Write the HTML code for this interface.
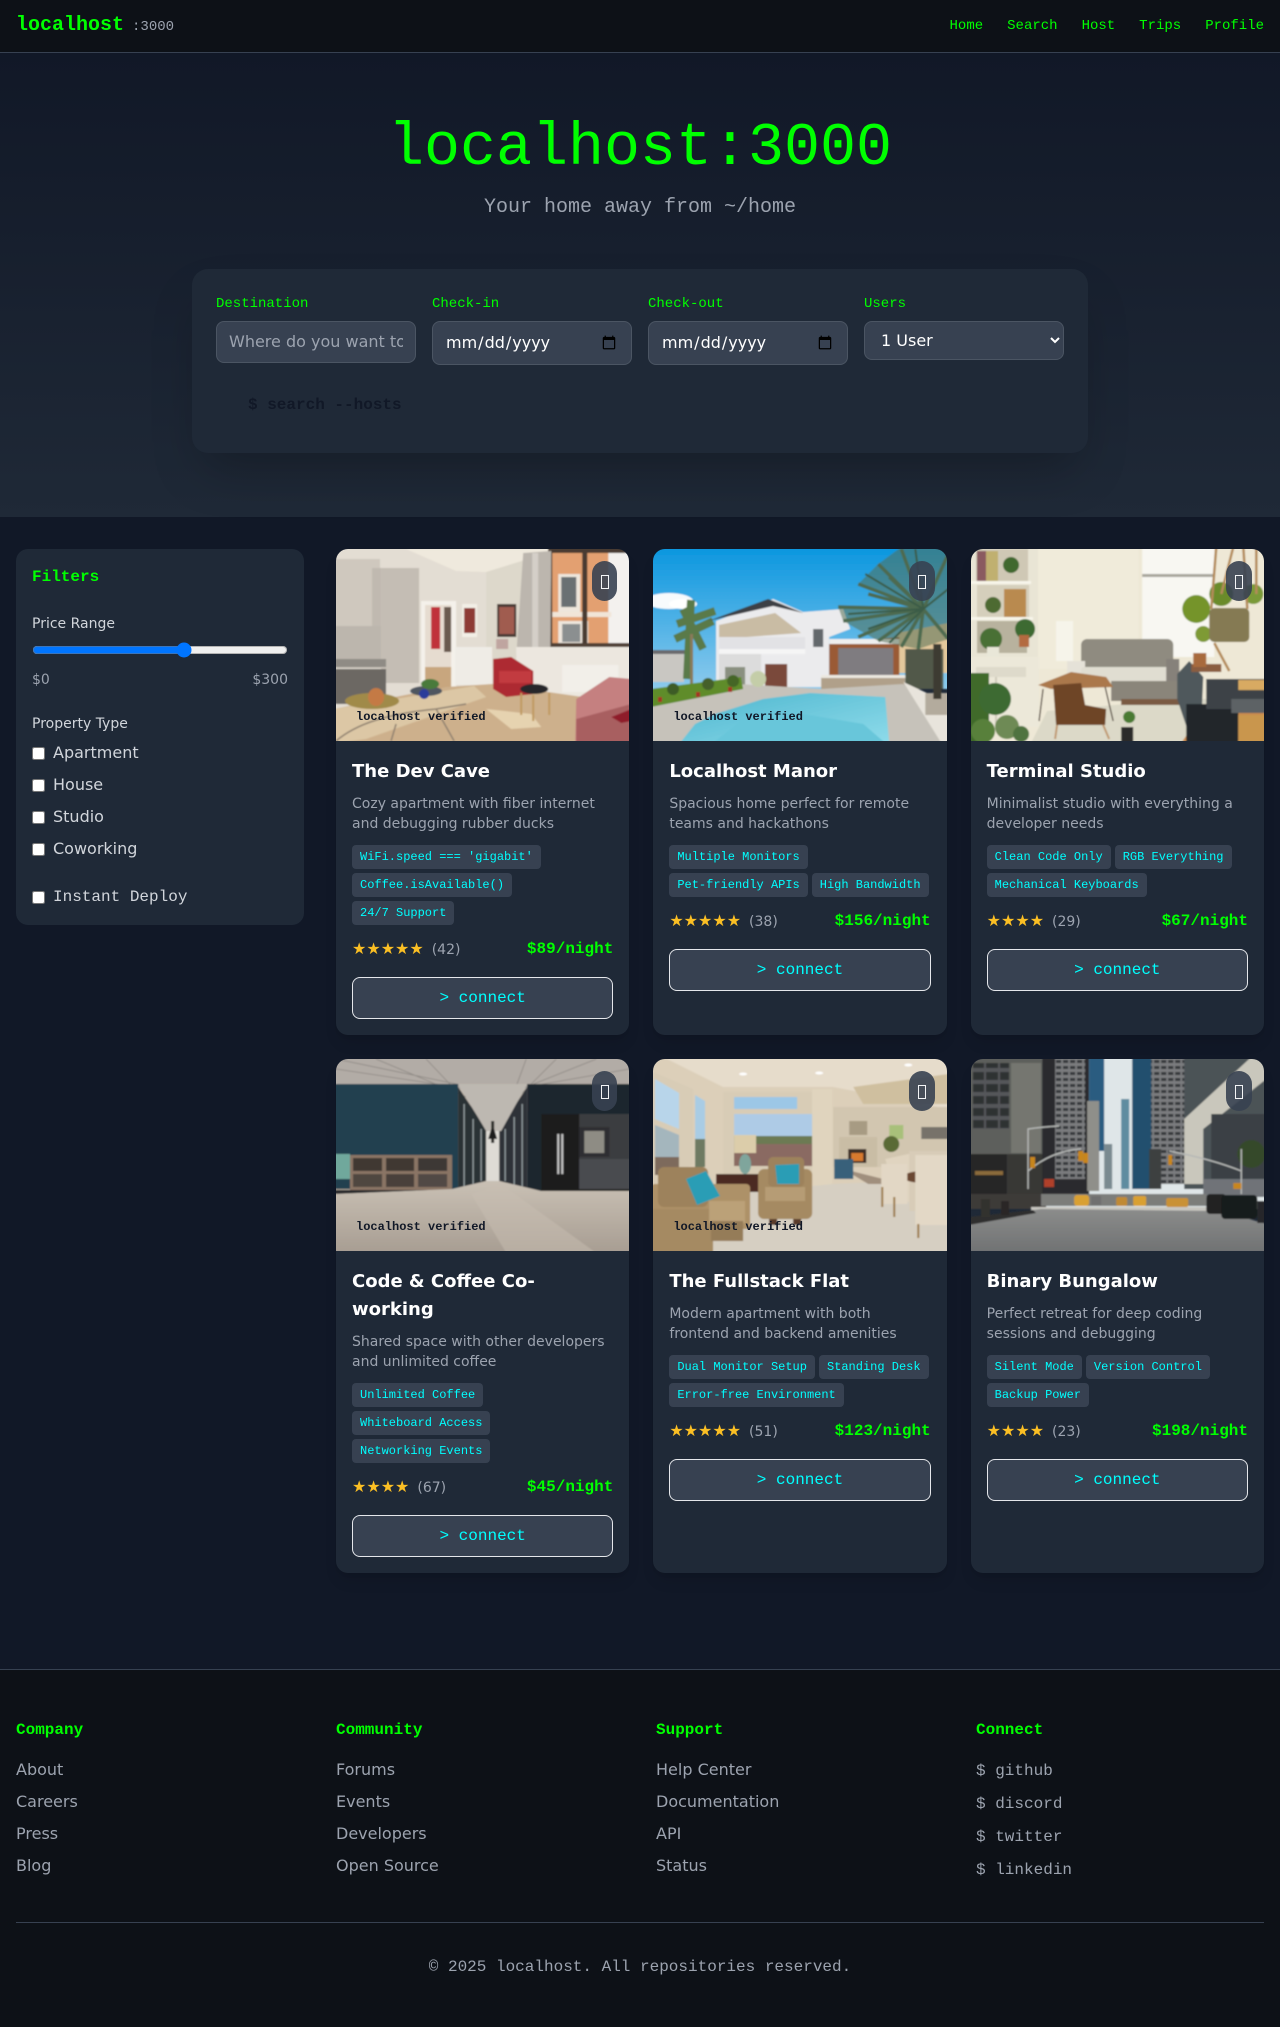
<!DOCTYPE html>
<html lang="en"><head><meta charset="utf-8"><title>localhost:3000</title>
<style>
*{box-sizing:border-box;margin:0;padding:0}
html,body{width:1280px;background:#111827}
body{font-family:"DejaVu Sans",sans-serif;font-size:16px;line-height:24px;color:#fff;height:2027px;overflow:hidden}
.mono{font-family:"Liberation Mono",monospace}
nav{height:53px;background:#0d1117;border-bottom:1px solid #374151;padding:12px 16px;display:flex;justify-content:space-between;align-items:center}
.logo b{font:bold 20px/28px "Liberation Mono",monospace;color:#0f0}
.logo span{font:14px/20px "Liberation Mono",monospace;color:#9ca3af;margin-left:8px}
.links{display:flex;gap:24px}
.links a{font:14px/20px "Liberation Mono",monospace;color:#0f0}
.hero{height:464px;padding-top:64px;background:linear-gradient(180deg,#111827,#1f2937);text-align:center}
h1{font:400 60px/60px "Liberation Mono",monospace;color:#0f0;margin-bottom:16px;position:relative;top:2px}
.sub{font:20px/28px "Liberation Mono",monospace;color:#9ca3af;margin-bottom:48px;position:relative;top:1px}
.search{width:896px;height:184px;margin:0 auto;background:#1f2937;border-radius:16px;padding:24px;box-shadow:0 25px 50px -12px rgba(0,0,0,.25);text-align:left}
.fields{display:grid;grid-template-columns:repeat(4,200px);gap:16px;align-items:start}
.fields label{display:block;font:14px/20px "Liberation Mono",monospace;color:#0f0;margin-bottom:8px;position:relative;top:1px}
.fields input,.fields select{display:block;width:100%;background:#374151;border:1px solid #4b5563;border-radius:8px;padding:8px 12px;color:#fff;font:16px/24px "DejaVu Sans",sans-serif}
.fields input::placeholder{color:#9ca3af}
.go{display:block;margin-top:16px;background:none;border:0;padding:12px 32px;font:bold 16px/24px "Liberation Mono",monospace;color:#111827}
.main{display:grid;grid-template-columns:288px 928px;gap:32px;padding:32px 16px;align-items:start}
aside{background:#1f2937;border-radius:12px;padding:16px;height:376px}
aside h3{font:bold 16px/24px "Liberation Mono",monospace;color:#0f0;margin-bottom:25px}
.lab{font-size:14px;line-height:20px;color:#d1d5db;margin-bottom:8px}
input[type=range]{display:block;width:100%;margin:0}
.range{display:flex;justify-content:space-between;font-size:14px;line-height:20px;color:#9ca3af;margin:12px 0 24px}
.ck{display:flex;align-items:center;height:24px;margin-bottom:8px;color:#d1d5db}
.ck input{width:13px;height:13px;margin:0 8px 0 0}
.grid{display:grid;grid-template-columns:repeat(3,1fr);gap:24px}
.card{background:#1f2937;border-radius:12px;overflow:hidden;box-shadow:0 10px 15px -3px rgba(0,0,0,.1),0 4px 6px -4px rgba(0,0,0,.1)}
.img{position:relative;height:192px;overflow:hidden}
.img svg{position:absolute;left:-2px;top:-2px;width:calc(100% + 4px);height:196px}
.heart{position:absolute;top:12px;right:12px;width:25.6px;height:40px;border:0;border-radius:999px;background:rgba(55,65,81,.9)}
.heart i{position:absolute;left:9px;top:14px;width:8px;height:14px;border:1px solid #f3f4f6}
.ver{position:absolute;left:12px;bottom:12px;padding:4px 8px;font:bold 12px/16px "Liberation Mono",monospace;color:#111827}
.body{padding:16px}
h2{font-size:18px;line-height:28px;font-weight:700;color:#fff;margin-bottom:8px;position:relative;top:1px}
.desc{font-size:14px;line-height:20px;color:#9ca3af;margin-bottom:12px;position:relative;top:1px}
.tags{display:flex;flex-wrap:wrap;gap:4px;margin-bottom:12px}
.tags span{font:12px/16px "Liberation Mono",monospace;color:#0ff;background:#374151;border-radius:4px;padding:4px 8px}
.row{display:flex;justify-content:space-between;align-items:center;margin-bottom:16px;height:24px}
.stars{color:#fbbf24}
.cnt{font-size:14px;color:#9ca3af;margin-left:8px}
.price{font:bold 16px/24px "Liberation Mono",monospace;color:#0f0}
.btn{display:block;width:100%;height:42px;background:#374151;border:1px solid #e5e7eb;border-radius:8px;color:#0ff;font:16px/24px "Liberation Mono",monospace}
footer{position:absolute;top:1669px;left:0;width:1280px;height:358px;background:#0d1117;border-top:1px solid #374151;padding:48px 16px}
.cols{display:grid;grid-template-columns:repeat(4,288px);gap:32px;height:204px}
.cols h4{font:bold 16px/24px "Liberation Mono",monospace;color:#0f0;margin-bottom:16px}
.cols ul{list-style:none}
.cols li{margin-bottom:8px;color:#9ca3af}
.cols li span{font-family:"Liberation Mono",monospace}
.copy{border-top:1px solid #374151;padding-top:32px;text-align:center;font:16px/24px "Liberation Mono",monospace;color:#9ca3af}
</style></head><body>
<nav><div class="logo"><b>localhost</b><span>:3000</span></div><div class="links"><a>Home</a><a>Search</a><a>Host</a><a>Trips</a><a>Profile</a></div></nav>
<section class="hero"><h1>localhost:3000</h1><p class="sub">Your home away from ~/home</p>
<div class="search"><div class="fields">
<div><label>Destination</label><input type="text" placeholder="Where do you want to go?"></div>
<div><label>Check-in</label><input type="date"></div>
<div><label>Check-out</label><input type="date"></div>
<div><label>Users</label><select><option>1 User</option></select></div>
</div><button class="go">$ search --hosts</button></div></section>

<div class="main"><aside><h3>Filters</h3>
<div class="lab">Price Range</div><input type="range" min="0" max="300" value="180">
<div class="range"><span>$0</span><span>$300</span></div>
<div class="lab" style="margin-bottom:7px">Property Type</div>
<label class="ck"><input type="checkbox">Apartment</label>
<label class="ck"><input type="checkbox">House</label>
<label class="ck"><input type="checkbox">Studio</label>
<label class="ck"><input type="checkbox">Coworking</label>
<label class="ck mono" style="margin-top:24px"><input type="checkbox">Instant Deploy</label>
</aside>
<div class="grid">

<article class="card"><div class="img"><svg viewBox="-2 -2 297 196" preserveAspectRatio="none"><defs><filter id="b" x="-2%" y="-2%" width="104%" height="104%"><feGaussianBlur stdDeviation=".8"/></filter>
<linearGradient id="sky" x1="0" y1="0" x2="0" y2="1"><stop offset="0" stop-color="#0a96df"/><stop offset="1" stop-color="#8ccaec"/></linearGradient>
<linearGradient id="fl4" x1="0" y1="0" x2="0" y2="1"><stop offset="0" stop-color="#c9c0b4"/><stop offset="1" stop-color="#a79d92"/></linearGradient>
<linearGradient id="st" x1="0" y1="0" x2="0" y2="1"><stop offset="0" stop-color="#8b8c8b"/><stop offset="1" stop-color="#6f7172"/></linearGradient>
<linearGradient id="pool" x1="0" y1="0" x2="1" y2="1"><stop offset="0" stop-color="#4db6cf"/><stop offset="1" stop-color="#8edbea"/></linearGradient>
<pattern id="win" width="14" height="12" patternUnits="userSpaceOnUse"><rect width="14" height="12" fill="#55575a"/><rect x="1" y="1" width="12" height="8" fill="#2e3032"/></pattern>
<pattern id="win2" width="7" height="6" patternUnits="userSpaceOnUse"><rect width="7" height="6" fill="#7a7c7e"/><rect x="1" y="1" width="5" height="3" fill="#35383a"/></pattern>
</defs>
<g filter="url(#b)">
<rect x="-2" y="-2" width="297" height="196" fill="#e3ddd3"/>
<polygon points="0,0 293,0 215,3 150,23 120,22 70,0" fill="#efe9dd"/>
<polygon points="150,23 215,3 215,100 150,122" fill="#ddd8cb"/>
<rect x="-2" y="10" width="46" height="67" fill="#cfc8be"/>
<rect x="36" y="19" width="9" height="60" fill="#c0b9b0"/>
<rect x="45" y="19" width="38" height="115" fill="#c4bdb4"/>
<rect x="-2" y="77" width="47" height="42" fill="#bcb6ad"/>
<rect x="-2" y="110" width="52" height="8" fill="#8f8b85"/>
<rect x="-2" y="120" width="52" height="35" fill="#6c6763"/>
<rect x="85" y="52" width="35" height="88" fill="#f4f1ea"/>
<rect x="89" y="56" width="26" height="70" fill="#e6dcd0"/>
<rect x="95" y="58" width="9" height="42" fill="#c0303a"/>
<rect x="108" y="58" width="7" height="45" fill="#6a5a50"/>
<rect x="89" y="118" width="26" height="22" fill="#c8a67e"/>
<rect x="126" y="55" width="15" height="33" fill="#f3efe6"/><rect x="128" y="59" width="11" height="25" fill="#8e3a34"/>
<rect x="161" y="55" width="19" height="33" fill="#4a3b36"/><rect x="163" y="58" width="15" height="27" fill="#a05b50"/>
<rect x="119" y="98" width="37" height="38" fill="#efece6"/>
<rect x="160" y="90" width="12" height="10" fill="#bfa5a0"/>
<rect x="215" y="-2" width="80" height="100" fill="#e3a071"/>
<rect x="272" y="-2" width="23" height="97" fill="#f3f1ee"/>
<rect x="222" y="25" width="22" height="38" fill="#eee6dc"/><rect x="225" y="28" width="15" height="30" fill="#6b7073"/>
<rect x="222" y="72" width="30" height="22" fill="#eee6dc"/><rect x="226" y="75" width="18" height="18" fill="#8b8f90"/>
<rect x="215" y="63" width="60" height="5" fill="#f1e5d8"/>
<rect x="212" y="-2" width="4" height="102" fill="#4a3a30"/><rect x="246" y="-2" width="5" height="100" fill="#4a3a30"/>
<rect x="212" y="94" width="83" height="5" fill="#4f4136"/><rect x="212" y="-2" width="83" height="6" fill="#4a3a30"/>
<polygon points="187,4 215,2 214,110 180,108" fill="#bcb6ae"/><rect x="196" y="4" width="6" height="105" fill="#d4cfc8"/>
<rect x="180" y="98" width="115" height="50" fill="#ece7df"/>
<rect x="226" y="116" width="56" height="27" fill="#f2efe9"/>
<polygon points="110,138 156,135 295,155 295,194 -2,194 -2,160" fill="#cdb08c"/>
<polygon points="150,160 195,165 205,178 175,180" fill="#e6d3b0"/>
<polygon points="157,110 175,108 197,122 197,145 170,148 157,140" fill="#ad2a30"/>
<rect x="163" y="122" width="32" height="12" fill="#c23a3f"/>
<ellipse cx="198" cy="140" rx="14" ry="5" fill="#26262a"/>
<rect x="184" y="144" width="2" height="22" fill="#c09a60"/><rect x="196" y="146" width="2" height="26" fill="#c09a60"/><rect x="212" y="144" width="2" height="22" fill="#c09a60"/>
<polygon points="240,150 273,128 295,130 295,194 239,194" fill="#c58080"/>
<polygon points="240,170 295,155 295,194 240,194" fill="#a85f60"/>
<polygon points="275,168 295,160 295,172 285,174" fill="#8f1f2c"/>
<polygon points="-2,160 138,137 150,148 30,190 -2,194" fill="#dcc7a5"/>
<ellipse cx="36" cy="152" rx="27" ry="8" fill="#a08a4a"/><ellipse cx="40" cy="148" rx="8" ry="9" fill="#c47a45"/>
<ellipse cx="90" cy="142" rx="16" ry="5" fill="#4f5660"/><circle cx="88" cy="145" r="5" fill="#2a3a9a"/><ellipse cx="94" cy="135" rx="9" ry="5" fill="#4a7a3a"/>
<path d="M0 192C20 175 50 165 100 160L130 155M55 192L60 175M100 160L118 192" stroke="#8f8070" stroke-width="1.5" fill="none"/>
</g></svg><button class="heart" aria-label="save"><i></i></button><span class="ver">localhost verified</span></div>
<div class="body"><h2>The Dev Cave</h2><p class="desc">Cozy apartment with fiber internet and debugging rubber ducks</p>
<div class="tags"><span>WiFi.speed === 'gigabit'</span><span>Coffee.isAvailable()</span><span>24/7 Support</span></div>
<div class="row"><div><span class="stars">★★★★★</span><span class="cnt">(42)</span></div><span class="price">$89/night</span></div><button class="btn">&gt; connect</button></div></article>

<article class="card"><div class="img"><svg viewBox="-2 -2 297 196" preserveAspectRatio="none"><g filter="url(#b)">
<rect x="-2" y="-2" width="297" height="142" fill="url(#sky)"/>
<ellipse cx="16" cy="52" rx="24" ry="8" fill="#f7fafc"/><ellipse cx="30" cy="55" rx="14" ry="5" fill="#fff"/>
<rect x="-2" y="103" width="33" height="30" fill="#c9c7c2"/><rect x="-2" y="101" width="35" height="4" fill="#6b6b6e"/>
<path d="M38 51L34 130M24 75L62 62M22 90L60 72M30 60L50 100" stroke="#5a7a48" stroke-width="8" fill="none"/>
<rect x="37" y="85" width="3" height="50" fill="#8a7a5a"/>
<polygon points="244,84 295,74 295,124 244,124" fill="#e3c89c"/>
<polygon points="63,72 120,50 150,63 190,60 197,80 176,88 176,138 63,138" fill="#ebebed"/>
<polygon points="55,72 115,50 128,55 150,64 120,57" fill="#3d3f45"/>
<polygon points="66,76 122,64 148,84 66,90" fill="#c9bca4"/>
<rect x="66" y="88" width="86" height="12" fill="#e2e2e5"/><rect x="66" y="100" width="86" height="5" fill="#f5f5f5"/>
<rect x="66" y="105" width="42" height="33" fill="#dcdcdc"/><rect x="112" y="115" width="22" height="26" fill="#7a4a3a"/>
<rect x="72" y="118" width="20" height="22" fill="#8a9080"/>
<rect x="160" y="80" width="10" height="18" fill="#63686c"/>
<polygon points="176,95 246,88 246,128 176,128" fill="#9a5a35"/><rect x="176" y="90" width="70" height="5" fill="#efefef"/>
<rect x="185" y="99" width="55" height="30" fill="#7f7c80"/>
<rect x="252" y="100" width="38" height="40" fill="#51584a"/>
<rect x="168" y="128" width="84" height="14" fill="#b0a08a"/>
<rect x="168" y="126" width="84" height="3" fill="#ece8e0"/>
<polygon points="-2,194 -2,150 85,135 168,140 250,135 295,154 295,194" fill="#c6c2ba"/>
<polygon points="-2,140 88,128 90,140 -2,158" fill="#5f8c2c"/>
<circle cx="20" cy="140" r="6" fill="#3d5b25"/><circle cx="55" cy="135" r="6" fill="#45612c"/><circle cx="80" cy="132" r="6" fill="#446628"/><circle cx="105" cy="130" r="8" fill="#c4cda8"/>
<rect x="5" y="148" width="4" height="5" fill="#a53025"/><rect x="43" y="143" width="4" height="5" fill="#a53025"/><rect x="75" y="138" width="4" height="5" fill="#a53025"/>
<polygon points="27,194 42,175 62,165 110,150 157,144 232,148 236,194" fill="url(#pool)"/>
<polygon points="60,194 90,170 150,165 210,175 232,194" fill="#67c6da"/>
<polygon points="250,133 295,154 295,194 288,194" fill="#e8e4dc"/>
<rect x="272" y="144" width="23" height="22" fill="#b3ab9d"/>
<rect x="280" y="95" width="8" height="55" fill="#3d3a30"/>
<polygon points="270,60 205,35 225,15 248,-2 295,-2 295,90 265,100 225,92 190,72 185,58" fill="#566f56" opacity=".55"/>
<g stroke="#4e6a4f" stroke-width="3.5" fill="none"><path d="M270 60L185 58M270 60L190 72M270 60L205 88M270 60L225 92M270 60L248 98M270 60L265 100M270 60L205 35M270 60L225 15M270 60L248 0M270 60L295 5M270 60L295 90M270 60L215 45M270 60L236 28"/></g>
<g stroke="#3b5c46" stroke-width="2" fill="none"><path d="M270 60L195 65M270 60L215 80M270 60L236 94M270 60L212 25M270 60L262 0M270 60L295 40"/></g>
</g></svg><button class="heart" aria-label="save"><i></i></button><span class="ver">localhost verified</span></div>
<div class="body"><h2>Localhost Manor</h2><p class="desc">Spacious home perfect for remote teams and hackathons</p>
<div class="tags"><span>Multiple Monitors</span><span>Pet-friendly APIs</span><span>High Bandwidth</span></div>
<div class="row"><div><span class="stars">★★★★★</span><span class="cnt">(38)</span></div><span class="price">$156/night</span></div><button class="btn">&gt; connect</button></div></article>

<article class="card"><div class="img"><svg viewBox="-2 -2 297 196" preserveAspectRatio="none"><g filter="url(#b)">
<rect x="-2" y="-2" width="297" height="196" fill="#eee8d6"/>
<rect x="171" y="-2" width="72" height="110" fill="#f8f7f2"/><rect x="171" y="25" width="72" height="3" fill="#a8a69c"/>
<rect x="67" y="-2" width="100" height="122" fill="#f0ebda"/>
<rect x="-2" y="-2" width="69" height="180" fill="#e9e5d5"/>
<rect x="5" y="0" width="52" height="32" fill="#cfc8b5"/><rect x="6" y="2" width="10" height="30" fill="#8a5a60"/><rect x="15" y="2" width="12" height="30" fill="#c0b070"/><circle cx="40" cy="16" r="8" fill="#41682e"/>
<rect x="0" y="32" width="60" height="3" fill="#f7f5ea"/>
<rect x="6" y="36" width="52" height="32" fill="#d5cfbc"/><circle cx="22" cy="56" r="8" fill="#4d6a33"/><rect x="33" y="40" width="22" height="28" fill="#b98a50"/>
<rect x="0" y="68" width="62" height="3" fill="#f7f5ea"/>
<rect x="6" y="72" width="50" height="32" fill="#b8b29e"/><circle cx="20" cy="90" r="11" fill="#4a6f35"/><circle cx="54" cy="80" r="10" fill="#3c6a33"/><rect x="48" y="86" width="10" height="12" fill="#b36a40"/>
<rect x="16" y="98" width="12" height="14" fill="#e9e7d8"/>
<rect x="0" y="108" width="68" height="70" fill="#ece8d9"/><rect x="5" y="118" width="50" height="10" fill="#dedacb"/>
<rect x="24" y="128" width="2" height="50" fill="#cfcbbb"/>
<rect x="85" y="72" width="17" height="40" fill="#f6f4ea"/>
<polygon points="60,194 76,162 210,150 295,150 295,194" fill="#dcd9c8"/>
<polygon points="210,194 240,150 295,150 295,194" fill="#c98a4e"/>
<rect x="110" y="90" width="92" height="38" rx="6" fill="#8f8b80"/>
<rect x="96" y="112" width="18" height="24" fill="#e5e2d8"/>
<rect x="110" y="118" width="90" height="14" rx="3" fill="#e0ddd1"/>
<rect x="195" y="110" width="13" height="44" fill="#86817a"/>
<rect x="140" y="132" width="66" height="20" fill="#8a857a"/><rect x="150" y="150" width="60" height="6" fill="#7a5a42"/>
<polygon points="67,136 100,123 135,128 142,138 80,140" fill="#ab784c"/>
<path d="M72 140L68 172M134 138L142 172" stroke="#3a2a20" stroke-width="1.2"/>
<polygon points="82,136 110,134 114,156 135,160 134,176 85,176" fill="#6e4526"/>
<path d="M86 176L84 190M132 176L138 190" stroke="#c09870" stroke-width="2"/>
<rect x="150" y="178" width="12" height="16" fill="#2a2a2a"/><circle cx="158" cy="168" r="6" fill="#4a7a33"/>
<rect x="-2" y="124" width="20" height="70" fill="#3f6a2a"/><circle cx="24" cy="150" r="16" fill="#3e6b33"/><circle cx="36" cy="178" r="12" fill="#6e8a54"/><circle cx="12" cy="182" r="12" fill="#58803b"/>
<circle cx="50" cy="185" r="8" fill="#4f7340"/>
<polygon points="206,125 218,112 232,128 230,175 220,192 206,150" fill="#50585c"/>
<rect x="215" y="155" width="52" height="39" fill="#20262b"/>
<rect x="235" y="130" width="60" height="30" fill="#3e4347"/>
<rect x="267" y="131" width="28" height="10" fill="#d8aa62"/><rect x="260" y="150" width="35" height="14" fill="#5d6265"/>
<rect x="267" y="166" width="28" height="28" fill="#c9964e"/>
<rect x="220" y="115" width="30" height="8" fill="#8a5d40"/><rect x="222" y="104" width="13" height="14" fill="#a86a3e"/>
<circle cx="225" cy="60" r="14" fill="#75942c"/><circle cx="250" cy="45" r="12" fill="#6a8b2c"/><circle cx="282" cy="45" r="10" fill="#7a9a38"/><circle cx="232" cy="85" r="8" fill="#7e9a34"/>
<rect x="238" y="59" width="40" height="34" rx="5" fill="#857a52"/>
<path d="M245 -2L240 60M262 -2L250 45M272 -2L276 60M285 -2L285 45M243 94L258 122" stroke="#b38a58" stroke-width="2.5" fill="none"/>
</g></svg><button class="heart" aria-label="save"><i></i></button></div>
<div class="body"><h2>Terminal Studio</h2><p class="desc">Minimalist studio with everything a developer needs</p>
<div class="tags"><span>Clean Code Only</span><span>RGB Everything</span><span>Mechanical Keyboards</span></div>
<div class="row"><div><span class="stars">★★★★</span><span class="cnt">(29)</span></div><span class="price">$67/night</span></div><button class="btn">&gt; connect</button></div></article>

<article class="card"><div class="img"><svg viewBox="-2 -2 297 196" preserveAspectRatio="none"><g filter="url(#b)">
<rect x="-2" y="-2" width="297" height="196" fill="url(#fl4)"/>
<rect x="-2" y="-2" width="297" height="32" fill="#b2aca6"/>
<g stroke="#8d8883" stroke-width=".8"><path d="M0 10L120 28M0 0L125 26M40 0L135 40M90 0L142 55M293 10L190 28M260 0L185 30M220 0L175 45M190 0L168 60"/></g>
<rect x="-2" y="25" width="124" height="105" fill="#23404f"/>
<polygon points="122,28 150,70 150,122 122,135" fill="#2a3034"/>
<polygon points="191,28 163,70 163,122 191,135" fill="#2d3338"/>
<g stroke="#a9b4b6" stroke-width="1"><path d="M128 45V128M137 60V125M145 70V122M169 70V122M178 58V126M186 45V130"/></g>
<polygon points="122,25 191,25 165,72 150,72" fill="#bdb8b1"/>
<rect x="150" y="72" width="13" height="52" fill="#dedbd5"/>
<rect x="155" y="62" width="3" height="22" fill="#2a2a28"/><polygon points="152,80 161,80 158,70 155,70" fill="#1a1a1a"/>
<rect x="191" y="25" width="104" height="108" fill="#1d262e"/>
<rect x="205" y="55" width="90" height="78" fill="#1c1c1e"/>
<rect x="243" y="55" width="52" height="75" fill="#3a3c40"/><rect x="243" y="68" width="30" height="30" fill="#2e2e30"/><rect x="248" y="72" width="20" height="22" fill="#8e8c84"/>
<rect x="243" y="100" width="52" height="30" fill="#4a4c50"/>
<rect x="221" y="75" width="2" height="40" fill="#c9c9c9"/><rect x="225" y="75" width="2" height="40" fill="#c9c9c9"/>
<rect x="-2" y="95" width="16" height="25" fill="#6fa89c"/>
<rect x="14" y="96" width="102" height="35" fill="#8a7465"/>
<rect x="17" y="99" width="29" height="13" fill="#3f3733"/><rect x="50" y="99" width="28" height="13" fill="#3f3733"/><rect x="82" y="99" width="29" height="13" fill="#3d3735"/>
<rect x="17" y="115" width="29" height="13" fill="#4f4640"/><rect x="50" y="115" width="28" height="13" fill="#4a403a"/><rect x="82" y="115" width="29" height="13" fill="#514a44"/>
<rect x="-2" y="131" width="118" height="4" fill="#26282a"/>
<polygon points="116,130 150,122 163,122 205,132 295,132 295,194 -2,194 -2,135" fill="url(#fl4)"/>
<polygon points="135,135 165,125 260,194 170,194" fill="#c7beb2" opacity=".5"/>
</g></svg><button class="heart" aria-label="save"><i></i></button><span class="ver">localhost verified</span></div>
<div class="body"><h2>Code &amp; Coffee Co-working</h2><p class="desc">Shared space with other developers and unlimited coffee</p>
<div class="tags"><span>Unlimited Coffee</span><span>Whiteboard Access</span><span>Networking Events</span></div>
<div class="row"><div><span class="stars">★★★★</span><span class="cnt">(67)</span></div><span class="price">$45/night</span></div><button class="btn">&gt; connect</button></div></article>

<article class="card"><div class="img"><svg viewBox="-2 -2 297 196" preserveAspectRatio="none"><g filter="url(#b)">
<rect x="-2" y="-2" width="297" height="196" fill="#dccfb9"/>
<polygon points="10,-2 295,-2 295,50 180,28 70,28" fill="#e6dccb"/>
<polygon points="200,28 295,15 295,45 210,45" fill="#cfbf9f"/>
<polygon points="-2,12 40,30 40,105 -2,130" fill="#d8ccb6"/>
<polygon points="2,20 26,34 26,70 2,60" fill="#b8d5ea"/><polygon points="2,66 26,76 26,105 2,115" fill="#a4b6bd"/>
<rect x="2" y="98" width="24" height="18" fill="#7d6a5c"/>
<polygon points="42,36 52,42 52,100 42,108" fill="#a9cce4"/>
<rect x="42" y="80" width="10" height="28" fill="#6e7a62"/>
<rect x="70" y="33" width="90" height="110" fill="#d8ccb6"/>
<rect x="81" y="38" width="63" height="12" fill="#9cc7e6"/>
<rect x="81" y="55" width="78" height="52" fill="#aecbe6"/>
<rect x="81" y="77" width="78" height="30" fill="#6c7a52"/>
<rect x="81" y="85" width="78" height="22" fill="#8a6a62"/>
<rect x="159" y="30" width="20" height="116" fill="#e0d4be"/>
<rect x="180" y="48" width="115" height="60" fill="#d2c6b0"/>
<rect x="196" y="62" width="18" height="14" fill="#a79b83"/><rect x="186" y="78" width="38" height="30" fill="#c9bda5"/><rect x="195" y="90" width="18" height="14" fill="#3d2f26"/><rect x="198" y="94" width="12" height="8" fill="#d87a2d"/>
<rect x="236" y="66" width="14" height="14" fill="#a8c07a"/><rect x="268" y="68" width="27" height="12" fill="#77726b"/>
<circle cx="238" cy="85" r="8" fill="#5a6a34"/>
<polygon points="-2,194 -2,140 130,130 180,125 295,120 295,194" fill="#d6cfc2"/>
<polygon points="190,110 215,125 238,125 230,120" fill="#a08f7d"/>
<rect x="181" y="100" width="19" height="20" fill="#39607a"/>
<rect x="81" y="76" width="22" height="18" fill="#dccdaa"/><ellipse cx="92" cy="105" rx="6" ry="10" fill="#7fa59c"/>
<rect x="63" y="115" width="46" height="18" fill="#4b2a20"/>
<rect x="105" y="110" width="54" height="50" rx="6" fill="#a58a62"/><rect x="115" y="98" width="36" height="30" rx="5" fill="#9d825c"/><rect x="112" y="128" width="40" height="14" fill="#b69c74"/>
<rect x="116" y="160" width="8" height="6" fill="#5a3a2a"/><rect x="140" y="160" width="8" height="6" fill="#5a3a2a"/>
<polygon points="122,106 146,105 146,125 124,125" fill="#2a9db5"/>
<rect x="-2" y="125" width="99" height="45" rx="4" fill="#ad9168"/>
<rect x="5" y="108" width="50" height="40" rx="6" fill="#9d825c"/>
<rect x="-2" y="150" width="62" height="44" fill="#a58a62"/><rect x="56" y="142" width="36" height="22" fill="#bba178"/><rect x="58" y="162" width="32" height="20" fill="#957c58"/>
<polygon points="33,120 53,112 67,137 44,146" fill="#2a9db5"/>
<polygon points="232,100 255,95 295,92 295,155 262,150 240,128" fill="#e0d4c0"/>
<rect x="256" y="92" width="39" height="60" fill="#d8ccb8"/>
<ellipse cx="270" cy="118" rx="20" ry="6" fill="#6b4630"/>
<rect x="262" y="96" width="33" height="70" fill="#e3d8c6"/>
<rect x="228" y="105" width="26" height="40" fill="#e2d7c5"/>
<rect x="228" y="128" width="2" height="20" fill="#9b7a4a"/><rect x="240" y="138" width="2" height="20" fill="#9b7a4a"/><rect x="264" y="165" width="2" height="14" fill="#9b7a4a"/>
<ellipse cx="90" cy="15" rx="4" ry="1.5" fill="#fff"/><ellipse cx="166" cy="14" rx="4" ry="1.5" fill="#fff"/><ellipse cx="255" cy="6" rx="4" ry="1.5" fill="#fff"/>
</g></svg><button class="heart" aria-label="save"><i></i></button><span class="ver">localhost verified</span></div>
<div class="body"><h2>The Fullstack Flat</h2><p class="desc">Modern apartment with both frontend and backend amenities</p>
<div class="tags"><span>Dual Monitor Setup</span><span>Standing Desk</span><span>Error-free Environment</span></div>
<div class="row"><div><span class="stars">★★★★★</span><span class="cnt">(51)</span></div><span class="price">$123/night</span></div><button class="btn">&gt; connect</button></div></article>

<article class="card"><div class="img"><svg viewBox="-2 -2 297 196" preserveAspectRatio="none"><g filter="url(#b)">
<rect x="-2" y="-2" width="297" height="152" fill="#dfe6e8"/>
<rect x="-2" y="-2" width="73" height="142" fill="#5d5f5c"/>
<rect x="2" y="4" width="36" height="66" fill="url(#win)"/><rect x="40" y="4" width="30" height="90" fill="#74766f"/>
<rect x="-2" y="95" width="38" height="40" fill="#272725"/><rect x="36" y="95" width="36" height="40" fill="#393836"/>
<rect x="4" y="112" width="28" height="4" fill="#8a6a3a"/>
<rect x="71" y="-2" width="47" height="142" fill="#2a2c2e"/>
<rect x="84" y="-2" width="30" height="122" fill="url(#win2)"/>
<rect x="118" y="-2" width="15" height="94" fill="#2b5c80"/>
<rect x="116" y="42" width="12" height="90" fill="#8f8f8a"/>
<rect x="133" y="85" width="8" height="45" fill="#7a8a90"/>
<rect x="150" y="40" width="8" height="90" fill="#5f8ca0"/>
<rect x="161" y="-2" width="20" height="132" fill="#24506e"/>
<rect x="180" y="-2" width="40" height="127" fill="url(#win2)"/>
<rect x="178" y="90" width="12" height="40" fill="#3d3f40"/>
<rect x="213" y="-2" width="82" height="132" fill="#4b5257"/>
<polygon points="213,60 280,-2 295,-2 295,20 232,70 232,125 213,125" fill="#c9c7bc"/>
<rect x="240" y="55" width="55" height="70" fill="#3a4045"/>
<rect x="232" y="120" width="63" height="18" fill="#6f7378"/>
<circle cx="280" cy="95" r="14" fill="#35482c"/>
<g stroke="#b6b8b6" stroke-width="1.4" fill="none"><path d="M57 130V70Q70 68 88 67M57 112Q80 92 110 90M270 135V90M270 112Q240 100 198 92"/></g>
<rect x="59" y="98" width="5" height="11" fill="#c8861c"/><rect x="107" y="92" width="5" height="10" fill="#c8861c"/><rect x="112" y="94" width="5" height="10" fill="#c8861c"/><rect x="197" y="96" width="4" height="10" fill="#c8861c"/><rect x="262" y="124" width="8" height="6" fill="#c8861c"/>
<rect x="73" y="120" width="10" height="8" fill="#b0402a"/>
<rect x="-2" y="135" width="77" height="15" fill="#3d3a38"/>
<rect x="70" y="135" width="165" height="12" fill="#7c7d7a"/>
<rect x="60" y="148" width="190" height="6" fill="#c8c6c0"/>
<polygon points="-2,160 70,150 250,152 295,165 295,194 -2,194" fill="url(#st)"/>
<polygon points="-2,158 62,151 65,154 -2,166" fill="#2e2e2e"/>
<rect x="10" y="140" width="9" height="18" fill="#33302d"/><rect x="30" y="142" width="8" height="14" fill="#2b2826"/>
<rect x="103" y="136" width="15" height="11" rx="3" fill="#d9a030"/><rect x="120" y="137" width="10" height="9" fill="#6f7070"/><rect x="145" y="138" width="11" height="9" rx="2" fill="#c08a34"/><rect x="162" y="137" width="13" height="10" rx="2" fill="#d9a030"/><rect x="195" y="139" width="22" height="9" rx="2" fill="#c99134"/>
<rect x="235" y="135" width="20" height="20" rx="4" fill="#202224"/><rect x="250" y="136" width="36" height="24" rx="4" fill="#181a1c"/><rect x="286" y="142" width="9" height="22" fill="#26282a"/>
</g></svg><button class="heart" aria-label="save"><i></i></button></div>
<div class="body"><h2>Binary Bungalow</h2><p class="desc">Perfect retreat for deep coding sessions and debugging</p>
<div class="tags"><span>Silent Mode</span><span>Version Control</span><span>Backup Power</span></div>
<div class="row"><div><span class="stars">★★★★</span><span class="cnt">(23)</span></div><span class="price">$198/night</span></div><button class="btn">&gt; connect</button></div></article>

</div></div>

<footer><div class="cols">
<div><h4>Company</h4><ul><li>About</li><li>Careers</li><li>Press</li><li>Blog</li></ul></div>
<div><h4>Community</h4><ul><li>Forums</li><li>Events</li><li>Developers</li><li>Open Source</li></ul></div>
<div><h4>Support</h4><ul><li>Help Center</li><li>Documentation</li><li>API</li><li>Status</li></ul></div>
<div><h4>Connect</h4><ul><li><span>$ github</span></li><li><span>$ discord</span></li><li><span>$ twitter</span></li><li><span>$ linkedin</span></li></ul></div>
</div><div class="copy">© 2025 localhost. All repositories reserved.</div></footer>
</body></html>
